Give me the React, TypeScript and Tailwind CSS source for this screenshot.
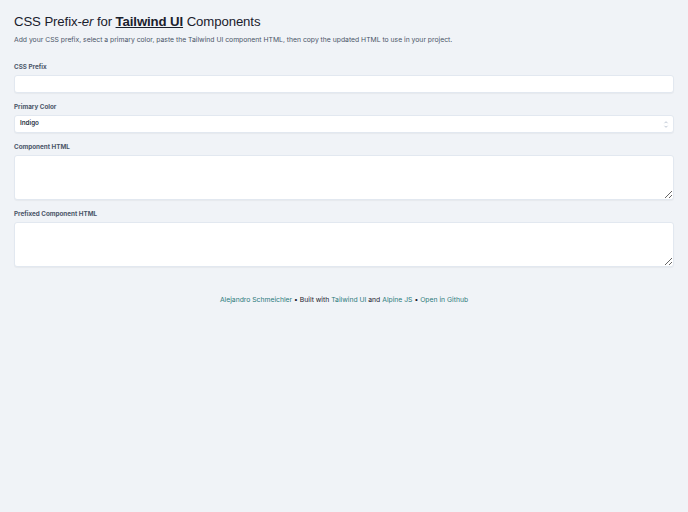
export default function App() {
  return (
    <div className="min-h-[512px] bg-[#f0f3f7] font-['Inter',sans-serif] text-[#1f2937] antialiased">
      <div className="px-[14px] pt-[13px]">
        <h1 className="font-['Liberation_Sans',sans-serif] text-[13.2px] leading-[18px] font-normal tracking-[-0.1px] text-[#1a202c]">
          CSS Prefix-<em>er</em> for{' '}
          <a className="font-bold underline">Tailwind UI</a> Components
        </h1>
        <p className="mt-[4px] text-[6.8px] leading-[10px] text-[#4a5568]">
          Add your CSS prefix, select a primary color, paste the Tailwind UI component HTML, then copy the updated HTML to use in your project.
        </p>

        <form className="mt-[17px] flex flex-col">
          <label className="text-[6.3px] leading-[10px] font-bold text-[#4a5568]">CSS Prefix</label>
          <input className="mt-[3px] h-[18px] rounded-[3px] border border-[#e2e8f0] bg-white shadow-[0_1px_1px_rgba(0,0,0,0.04)]" />

          <label className="mt-[9px] text-[6.3px] leading-[10px] font-bold text-[#4a5568]">Primary Color</label>
          <div className="relative mt-[3px] flex h-[18px] items-center rounded-[3px] border border-[#e2e8f0] bg-white px-[5px] shadow-[0_1px_1px_rgba(0,0,0,0.04)]">
            <span className="text-[6.3px] font-semibold text-[#2d3748]">Indigo</span>
            <svg className="absolute right-[4px] top-[4px] h-[9px] w-[6px] text-[#a0aec0]" viewBox="0 0 6 9" fill="none" stroke="currentColor" strokeWidth="0.7">
              <path d="M1.5 3.2 L3 1.7 L4.5 3.2" />
              <path d="M1.5 5.8 L3 7.3 L4.5 5.8" />
            </svg>
          </div>

          <label className="mt-[9px] text-[6.3px] leading-[10px] font-bold text-[#4a5568]">Component HTML</label>
          <textarea className="mt-[3px] h-[45px] rounded-[3px] border border-[#e2e8f0] bg-white shadow-[0_1px_1px_rgba(0,0,0,0.04)]" />

          <label className="mt-[9px] text-[6.3px] leading-[10px] font-bold text-[#4a5568]">Prefixed Component HTML</label>
          <textarea className="mt-[3px] h-[45px] rounded-[3px] border border-[#e2e8f0] bg-white shadow-[0_1px_1px_rgba(0,0,0,0.04)]" />
        </form>

        <p className="mt-[28px] text-center text-[6.8px] leading-[10px] text-[#1a202c]">
          <a className="text-[#2c7a7b]">Alejandro Schmeichler</a> • Built with{' '}
          <a className="text-[#2c7a7b]">Tailwind UI</a> and{' '}
          <a className="text-[#2c7a7b]">Alpine JS</a> •{' '}
          <a className="text-[#2c7a7b]">Open in Github</a>
        </p>
      </div>
    </div>
  );
}
